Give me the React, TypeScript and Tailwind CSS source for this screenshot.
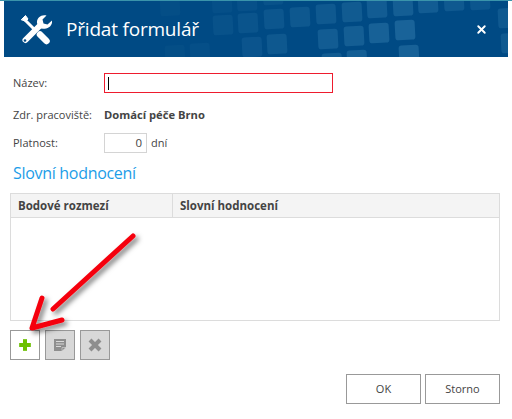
import { Plus, X } from "lucide-react";

const UI = { fontFamily: "'Open Sans', 'Liberation Sans', sans-serif" } as const;

// tiles of the header pattern: x, y, opacity
const TILES: [number, number, number][] = [
  [160, -4, 0.04], [165, 45, 0.04], [190, 43, 0.05], [212, -7, 0.05], [237, -9, 0.07], [263, -15, 0.08],
  [213, 15, 0.08], [238, 13, 0.1], [264, 9, 0.12], [290, 7, 0.14], [316, 4, 0.15], [342, 2, 0.17],
  [367, -2, 0.18], [393, -4, 0.2], [418, -7, 0.18], [444, -9, 0.15], [470, -10, 0.12], [498, 8, 0.15],
  [242, 37, 0.11], [267, 34, 0.14], [318, 29, 0.18], [344, 26, 0.2], [369, 23, 0.23], [395, 20, 0.25],
  [501, 33, 0.15], [322, 53, 0.17], [347, 50, 0.2], [399, 45, 0.23],
];

function HeaderPattern() {
  return (
    <svg className="absolute inset-0" width="504" height="56" viewBox="4 1 504 56">
      {TILES.map(([x, y, o]) => (
        <rect
          key={`${x}-${y}`}
          x={x}
          y={y}
          width="20"
          height="20"
          rx="3"
          fill="#62b0d8"
          opacity={o}
          transform={`rotate(-3 ${x + 10} ${y + 10})`}
        />
      ))}
    </svg>
  );
}

function ToolsIcon() {
  return (
    <svg width="32" height="32" viewBox="0 0 32 32" fill="none" stroke="#fff" strokeLinecap="round">
      {/* screwdriver */}
      <path d="M4 6 16 18" strokeWidth="3" strokeLinecap="butt" />
      <path d="M1.5 6.5 5.5 2.5 8 6 6 8Z" fill="#fff" strokeWidth="1" strokeLinejoin="round" />
      <path d="M20 21.5 26.5 28" strokeWidth="6.5" />
      {/* wrench */}
      <path d="M20 12.5 5.5 27" strokeWidth="6" />
      <path
        d="M32 7.5 27.5 11.5 23.5 10.5 22.5 6.5 26.5 2.5C21.5 1 16.5 4.5 17 10L19 15C25 17.5 33 14 32 7.5Z"
        fill="#fff"
        stroke="none"
      />
      <circle cx="5" cy="27.5" r="1.3" fill="#004a84" stroke="none" />
    </svg>
  );
}

function NoteIcon() {
  return (
    <svg width="12" height="12" viewBox="0 0 12 12">
      <path d="M0 0H12V8L8 12H0Z" fill="#8e8e8e" />
      <path d="M2 2.5H10M2 5H10M2 7.5H7" stroke="#d8d8d8" strokeWidth="1" />
      <path d="M8 8.5H12L8 12Z" fill="#8e8e8e" stroke="#d8d8d8" strokeWidth="0.6" />
    </svg>
  );
}

function Arrow() {
  return (
    <svg className="absolute left-0 top-0" width="150" height="340" viewBox="0 0 150 340">
      <defs>
        <filter id="arrowShadow" x="-30%" y="-30%" width="170%" height="170%">
          <feDropShadow dx="3" dy="3" stdDeviation="2.5" floodColor="#000" floodOpacity="0.5" />
        </filter>
      </defs>
      <g filter="url(#arrowShadow)" fill="none" stroke="#f5000f" strokeLinecap="round" strokeLinejoin="round">
        <path d="M133 236 53 309" strokeWidth="5" />
        <path d="M42 298 32 328 62 320" strokeWidth="5" />
      </g>
    </svg>
  );
}

export default function App() {
  return (
    <div style={UI} className="relative h-[419px] w-[512px] overflow-hidden bg-white text-[11px] text-[#444]">
      <div className="h-px bg-[#3a94ab]" />

      <header className="relative mx-1 flex h-[56px] items-center overflow-hidden bg-[#004a84] pl-[16px] pr-[20px] text-white">
        <HeaderPattern />
        <div className="relative"><ToolsIcon /></div>
        <h1 className="relative ml-[14px] flex-1 text-[19px] leading-none tracking-[-0.2px]">Přidat formulář</h1>
        <X className="relative" size={13} strokeWidth={3.5} />
      </header>

      <div className="px-[13px] pt-[16px]">
        <div className="flex h-[20px] items-center">
          <span className="w-[91px]">Název:</span>
          <div className="flex h-[20px] w-[229px] items-center border border-[#ee1c2e] pl-[3px]">
            <span className="h-[13px] w-px bg-black" />
          </div>
        </div>
        <div className="mt-[12px] flex h-[20px] items-center">
          <span className="w-[91px]">Zdr. pracoviště:</span>
          <span className="text-[11.2px] font-bold">Domácí péče Brno</span>
        </div>
        <div className="mt-[8px] flex h-[20px] items-center">
          <span className="w-[91px]">Platnost:</span>
          <div className="flex h-[20px] w-[43px] items-center justify-end border border-[#d4d4d4] pr-[4px] text-[11.5px]">0</div>
          <span className="ml-[4px]">dní</span>
        </div>
      </div>

      <h2 className="ml-[13px] mt-[8px] text-[16px] leading-[24px] tracking-[-0.3px] text-[#1c9de8]">Slovní hodnocení</h2>

      <div className="mx-[10px] mt-[8px] h-[128px] w-[490px] border border-[#dcdcdc]">
        <div className="flex h-[24px] border-b border-[#dcdcdc] bg-[#f4f4f4] text-[11.5px] font-bold">
          <div className="flex w-[162px] items-center border-r border-[#dcdcdc] pl-[7px]">Bodové rozmezí</div>
          <div className="flex items-center pl-[7px]">Slovní hodnocení</div>
        </div>
      </div>

      <div className="ml-[10px] mt-[9px] flex gap-[5px]">
        <button className="flex h-[30px] w-[30px] items-center justify-center border border-[#999] bg-white">
          <Plus size={20} strokeWidth={4} color="#6cc000" absoluteStrokeWidth strokeLinecap="butt" />
        </button>
        <button className="flex h-[30px] w-[30px] items-center justify-center border border-[#999] bg-[#d8d8d8]">
          <NoteIcon />
        </button>
        <button className="flex h-[30px] w-[30px] items-center justify-center border border-[#999] bg-[#d8d8d8]">
          <X size={20} strokeWidth={4} color="#8e8e8e" absoluteStrokeWidth strokeLinecap="butt" />
        </button>
      </div>

      <div className="mr-[12px] mt-[14px] flex justify-end gap-[4px] text-[11px]">
        <button className="h-[30px] w-[75px] border border-[#999] bg-white">OK</button>
        <button className="h-[30px] w-[75px] border border-[#999] bg-white">Storno</button>
      </div>

      <Arrow />
    </div>
  );
}
